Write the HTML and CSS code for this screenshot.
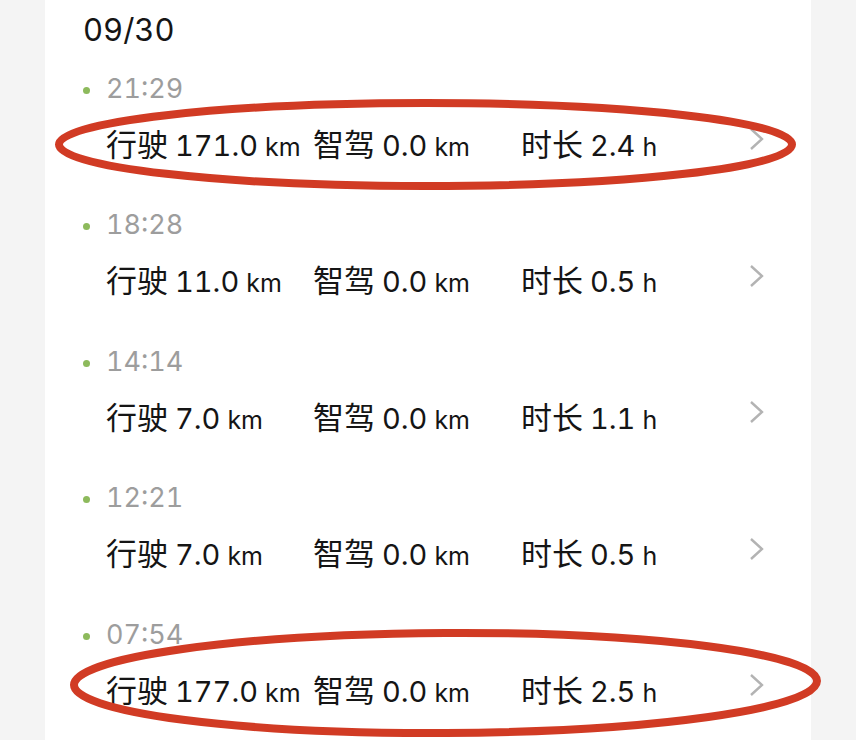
FILE: index.html
```html
<!DOCTYPE html>
<html>
<head>
	<meta charset="utf-8">
	<meta name="viewport" content="width=device-width, initial-scale=1">
	<title>行程</title>
	<link rel="stylesheet" href="styles.css">
</head>
<body>
	<div class="page">
		<div class="card">
			<div class="date">09/30</div>

			<div class="trip">
				<div class="time"><span class="dot"></span>21:29</div>
				<div class="stats">
					<span class="stat"><span class="label">行驶</span> <span class="num">171.0</span> <span class="unit">km</span></span>
					<span class="stat"><span class="label">智驾</span> <span class="num">0.0</span> <span class="unit">km</span></span>
					<span class="stat"><span class="label">时长</span> <span class="num">2.4</span> <span class="unit">h</span></span>
					<svg class="arrow" viewBox="0 0 18 24"><polyline points="3,2 14,12 3,22"/></svg>
				</div>
			</div>

			<div class="trip">
				<div class="time"><span class="dot"></span>18:28</div>
				<div class="stats">
					<span class="stat"><span class="label">行驶</span> <span class="num">11.0</span> <span class="unit">km</span></span>
					<span class="stat"><span class="label">智驾</span> <span class="num">0.0</span> <span class="unit">km</span></span>
					<span class="stat"><span class="label">时长</span> <span class="num">0.5</span> <span class="unit">h</span></span>
					<svg class="arrow" viewBox="0 0 18 24"><polyline points="3,2 14,12 3,22"/></svg>
				</div>
			</div>

			<div class="trip">
				<div class="time"><span class="dot"></span>14:14</div>
				<div class="stats">
					<span class="stat"><span class="label">行驶</span> <span class="num">7.0</span> <span class="unit">km</span></span>
					<span class="stat"><span class="label">智驾</span> <span class="num">0.0</span> <span class="unit">km</span></span>
					<span class="stat"><span class="label">时长</span> <span class="num">1.1</span> <span class="unit">h</span></span>
					<svg class="arrow" viewBox="0 0 18 24"><polyline points="3,2 14,12 3,22"/></svg>
				</div>
			</div>

			<div class="trip">
				<div class="time"><span class="dot"></span>12:21</div>
				<div class="stats">
					<span class="stat"><span class="label">行驶</span> <span class="num">7.0</span> <span class="unit">km</span></span>
					<span class="stat"><span class="label">智驾</span> <span class="num">0.0</span> <span class="unit">km</span></span>
					<span class="stat"><span class="label">时长</span> <span class="num">0.5</span> <span class="unit">h</span></span>
					<svg class="arrow" viewBox="0 0 18 24"><polyline points="3,2 14,12 3,22"/></svg>
				</div>
			</div>

			<div class="trip">
				<div class="time"><span class="dot"></span>07:54</div>
				<div class="stats">
					<span class="stat"><span class="label">行驶</span> <span class="num">177.0</span> <span class="unit">km</span></span>
					<span class="stat"><span class="label">智驾</span> <span class="num">0.0</span> <span class="unit">km</span></span>
					<span class="stat"><span class="label">时长</span> <span class="num">2.5</span> <span class="unit">h</span></span>
					<svg class="arrow" viewBox="0 0 18 24"><polyline points="3,2 14,12 3,22"/></svg>
				</div>
			</div>
		</div>

		<!-- red marks drawn over the list -->
		<svg class="marks" width="856" height="740" viewBox="0 0 856 740">
			<ellipse cx="425.5" cy="144.5" rx="366.5" ry="41.5"/>
			<ellipse cx="445.5" cy="683" rx="371.5" ry="50" transform="rotate(-0.3 445.5 683)"/>
		</svg>
	</div>
</body>
</html>
```

FILE: styles.css
```css
* {
	margin: 0;
	padding: 0;
	box-sizing: border-box;
}

body {
	background: #f4f4f4;
	font-family: Inter, "Noto Sans CJK SC", sans-serif;
	font-variant-numeric: tabular-nums;
	color: #151515;
}

.page {
	position: relative;
	width: 856px;
	height: 740px;
	overflow: hidden;
}

.card {
	margin: 0 45px;
	height: 740px;
	background: #ffffff;
	padding: 8px 45px 0 38px;
}

.date {
	font-size: 31px;
	line-height: 44px;
	margin-bottom: 18px;
}

.trip {
	margin-bottom: 36.5px;
}

.time {
	display: flex;
	align-items: center;
	gap: 16px;
	height: 36px;
	font-size: 27px;
	color: #9d9d9d;
}

.dot {
	width: 7px;
	height: 7px;
	border-radius: 50%;
	background: #8dba5c;
	margin-top: 4px;
}

.stats {
	display: grid;
	grid-template-columns: 207px 208px 1fr 18px;
	align-items: center;
	height: 56px;
	margin-top: 8px;
	padding-left: 23px;
	white-space: nowrap;
}

.stat {
	font-size: 26px;
}

.label {
	font-size: 31px;
}

.num {
	font-size: 29px;
}

.unit {
	font-size: 25px;
}

.arrow {
	width: 18px;
	height: 24px;
	margin-top: -6px;
}

.arrow polyline {
	fill: none;
	stroke: #b3b3b3;
	stroke-width: 2.4;
}

.marks {
	position: absolute;
	top: 0;
	left: 0;
	pointer-events: none;
}

.marks ellipse {
	fill: none;
	stroke: #d13b24;
	stroke-width: 8;
}
```
